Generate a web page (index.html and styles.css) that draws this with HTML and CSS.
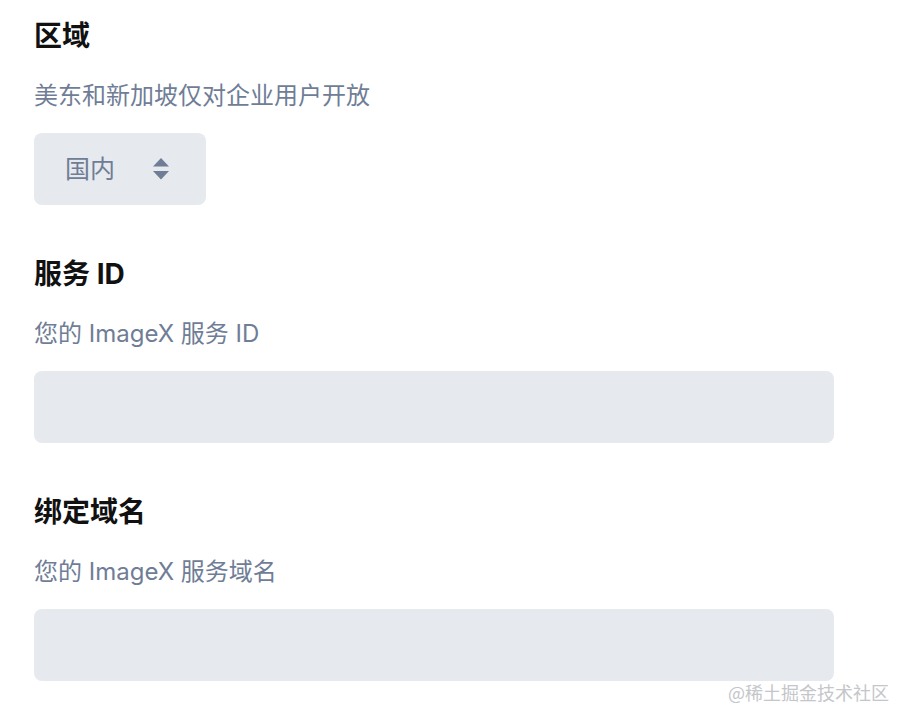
FILE: index.html
```html
<!DOCTYPE html>
<html lang="zh-CN">
<head>
<meta charset="utf-8">
<title>ImageX 设置</title>
<link rel="stylesheet" href="styles.css">
</head>
<body>
<main class="form">
  <section class="field">
    <h2 class="label">区域</h2>
    <p class="hint">美东和新加坡仅对企业用户开放</p>
    <div class="select">
      <span class="select-value">国内</span>
      <svg class="select-arrows" width="16" height="22" viewBox="0 0 16 22" aria-hidden="true">
        <path d="M8 0 L16 8.5 L0 8.5 Z" fill="#6f7d96"/>
        <path d="M0 13 L16 13 L8 21.5 Z" fill="#6f7d96"/>
      </svg>
    </div>
  </section>
  <section class="field">
    <h2 class="label">服务 ID</h2>
    <p class="hint">您的 ImageX 服务 ID</p>
    <div class="input"></div>
  </section>
  <section class="field">
    <h2 class="label">绑定域名</h2>
    <p class="hint">您的 ImageX 服务域名</p>
    <div class="input"></div>
  </section>
</main>
<div class="watermark">@稀土掘金技术社区</div>
</body>
</html>
```
FILE: styles.css
```css
html, body {
  margin: 0;
  padding: 0;
  background: #ffffff;
}
body {
  font-family: "Inter", "Noto Sans CJK SC", sans-serif;
  width: 910px;
  height: 722px;
  overflow: hidden;
  position: relative;
}
.form {
  padding: 18px 0 0 34px;
  display: flex;
  flex-direction: column;
  gap: 51px;
}
.field {
  display: flex;
  flex-direction: column;
}
.label {
  margin: 0;
  font-size: 28px;
  line-height: 36px;
  font-weight: 700;
  color: #111111;
}
.hint {
  margin: 24px 0 0;
  font-size: 24px;
  line-height: 36px;
  color: #6f7d96;
}
.select {
  margin-top: 19px;
  width: 172px;
  height: 72px;
  box-sizing: border-box;
  border-radius: 8px;
  background: #e6e9ee;
  display: flex;
  align-items: center;
  padding-left: 31px;
}
.select-value {
  font-size: 25px;
  color: #6f7d96;
  line-height: 36px;
}
.select-arrows {
  margin-left: 38px;
}
.input {
  margin-top: 19px;
  width: 800px;
  height: 72px;
  border-radius: 8px;
  background: #e6e9ee;
}
.watermark {
  position: absolute;
  left: 728px;
  top: 680px;
  font-family: "Noto Sans CJK SC", sans-serif;
  font-size: 18px;
  line-height: 24px;
  color: #c4c6ca;
  letter-spacing: 0;
}
```
